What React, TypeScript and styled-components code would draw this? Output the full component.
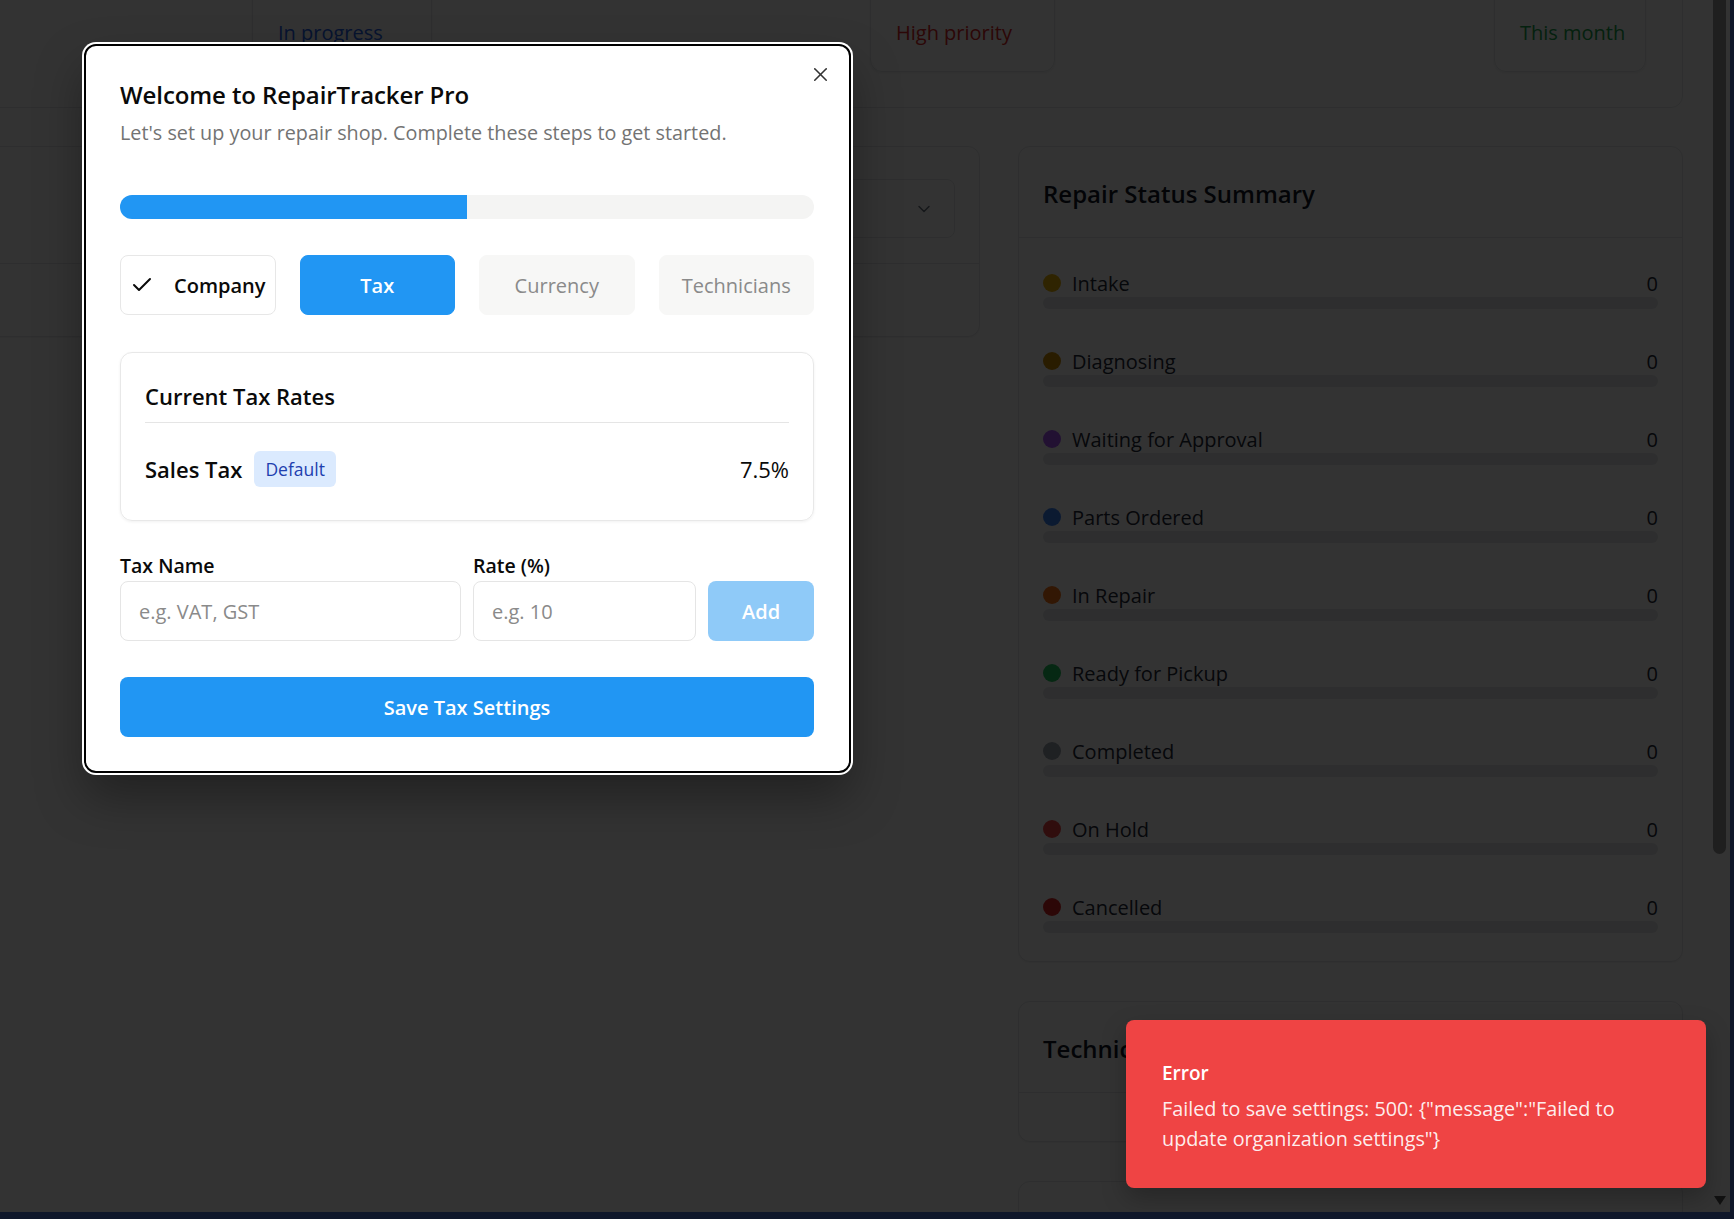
import React from "react";
import styled, { createGlobalStyle } from "styled-components";
import { X, Check, ChevronDown } from "lucide-react";

const GlobalStyle = createGlobalStyle`
  html, body { margin: 0; padding: 0; background: #0f172a; }
  body { font-family: "Open Sans", "Noto Sans", "Liberation Sans", sans-serif; }
  * { box-sizing: border-box; }
`;

const Frame = styled.div`
  position: relative;
  width: 1730px;
  height: 1212px;
  overflow: hidden;
  background: #ffffff;
  display: flex;
  color: #111827;
`;

const Main = styled.main`
  flex: 1;
  min-width: 0;
  overflow: hidden;
`;

const Content = styled.div`
  display: flex;
  flex-direction: column;
  gap: 38px;
  margin: -60px 30px 0 -16px;
`;

const StatsPanel = styled.section`
  height: 168px;
  border: 1px solid #e5e7eb;
  border-radius: 12px;
  display: flex;
  align-items: flex-end;
  padding-bottom: 35px;
`;

const StatCard = styled.div<{ $w: number; $offset: number; $color: string }>`
  width: ${(p) => p.$w}px;
  margin-left: ${(p) => p.$offset}px;
  height: 112px;
  border: 1px solid #e5e7eb;
  border-radius: 12px;
  box-shadow: 0 1px 3px rgba(0, 0, 0, 0.08);
  display: flex;
  align-items: flex-end;
  padding: 0 0 25px 25px;
  font-size: 20px;
  line-height: 26px;
  white-space: nowrap;
  color: ${(p) => p.$color};
`;

const Grid = styled.div`
  display: grid;
  grid-template-columns: 996px 665px;
  gap: 38px;
  align-items: start;
`;

const Column = styled.div`
  display: flex;
  flex-direction: column;
  gap: 39px;
`;

const Card = styled.div`
  background: #ffffff;
  border: 1px solid #e5e7eb;
  border-radius: 12px;
  box-shadow: 0 1px 2px rgba(0, 0, 0, 0.05);
  overflow: hidden;
`;

const FilterHead = styled.div`
  height: 117px;
  border-bottom: 1px solid #e5e7eb;
  display: flex;
  justify-content: flex-end;
  align-items: center;
  padding: 7px 24px 0;
`;

const Select = styled.div`
  width: 300px;
  height: 59px;
  border: 1px solid #e5e7eb;
  border-radius: 8px;
  display: flex;
  align-items: center;
  justify-content: flex-end;
  padding: 0 20px;
  color: #6b7280;
`;

const FilterBody = styled.div`
  height: 72px;
`;

const CardHead = styled.div`
  padding: 30px 24px 26px;
  border-bottom: 1px solid #e5e7eb;
  font-size: 24px;
  font-weight: 600;
  line-height: 34px;
  color: #111827;
  white-space: nowrap;
`;

const StatusList = styled.div`
  padding: 31px 24px 28px;
  display: flex;
  flex-direction: column;
  gap: 38px;
`;

const StatusRow = styled.div`
  display: flex;
  flex-direction: column;
`;

const StatusLine = styled.div`
  display: flex;
  align-items: center;
  height: 28px;
  font-size: 20px;
  color: #1f2937;
`;

const Dot = styled.span<{ $color: string }>`
  width: 18px;
  height: 18px;
  border-radius: 50%;
  background: ${(p) => p.$color};
  margin-right: 11px;
  flex: none;
`;

const StatusName = styled.span`
  flex: 1;
`;

const Track = styled.div`
  height: 12px;
  border-radius: 999px;
  background: #e5e7eb;
`;

const EmptyBody = styled.div<{ $h: number }>`
  height: ${(p) => p.$h}px;
`;

const ScrollCol = styled.div`
  width: 17px;
  flex: none;
  display: flex;
  flex-direction: column;
  align-items: flex-start;
`;

const Thumb = styled.div`
  width: 13px;
  height: 854px;
  background: #9a9a9a;
  border-radius: 0 0 7px 7px;
`;

const Spacer = styled.div`
  flex: 1;
`;

const DownArrow = styled.div`
  width: 0;
  height: 0;
  border-left: 6px solid transparent;
  border-right: 6px solid transparent;
  border-top: 9px solid #555;
  margin: 0 0 7px 1px;
`;

const Overlay = styled.div`
  position: absolute;
  inset: 0;
  background: rgba(0, 0, 0, 0.8);
`;

const Dialog = styled.div`
  position: absolute;
  left: 84px;
  top: 44px;
  width: 767px;
  background: #ffffff;
  border: 2px solid #000000;
  border-radius: 12px;
  box-shadow: 0 0 0 2px #ffffff, 0 24px 48px rgba(0, 0, 0, 0.35);
  padding: 34px 35px 34px 34px;
  color: #0a0a0a;
`;

const CloseButton = styled.button`
  position: absolute;
  top: 16px;
  right: 17px;
  width: 24px;
  height: 24px;
  padding: 0;
  border: none;
  background: transparent;
  color: #333;
  display: flex;
  align-items: center;
  justify-content: center;
`;

const Title = styled.h2`
  margin: 0;
  font-size: 24px;
  font-weight: 600;
  line-height: 30px;
  letter-spacing: -0.1px;
`;

const Subtitle = styled.p`
  margin: 10px 0 0;
  font-size: 19.8px;
  line-height: 26px;
  color: #737373;
`;

const Progress = styled.div`
  margin-top: 49px;
  height: 24px;
  border-radius: 999px;
  background: #f4f4f3;
  overflow: hidden;
`;

const ProgressFill = styled.div`
  height: 100%;
  background: #2196f3;
`;

const Steps = styled.div`
  margin-top: 36px;
  display: grid;
  grid-template-columns: repeat(4, 1fr);
  gap: 24px;
`;

type StepState = "done" | "active" | "pending";

const StepTab = styled.div<{ $state: StepState }>`
  height: 60px;
  border-radius: 8px;
  display: flex;
  align-items: center;
  justify-content: center;
  gap: 20px;
  font-size: 20px;
  font-weight: ${(p) => (p.$state === "pending" ? 500 : 600)};
  white-space: nowrap;
  border: 1px solid ${(p) => (p.$state === "done" ? "#e7e7e7" : p.$state === "active" ? "#2196f3" : "#f7f7f6")};
  background: ${(p) => (p.$state === "done" ? "#ffffff" : p.$state === "active" ? "#2196f3" : "#f7f7f6")};
  color: ${(p) => (p.$state === "done" ? "#0a0a0a" : p.$state === "active" ? "#ffffff" : "#8a8a8a")};
`;

const TaxCard = styled.div`
  margin-top: 37px;
  border: 1px solid #e8e8e8;
  border-radius: 12px;
  box-shadow: 0 1px 3px rgba(0, 0, 0, 0.06);
  padding: 0 24px 33px;
`;

const TaxCardTitle = styled.h3`
  margin: 0;
  padding: 29px 0 12px;
  font-size: 22px;
  font-weight: 600;
  line-height: 28px;
  border-bottom: 1px solid #e5e5e5;
`;

const TaxRow = styled.div`
  margin-top: 28px;
  display: flex;
  align-items: center;
`;

const TaxName = styled.span`
  font-size: 22px;
  font-weight: 600;
  margin-right: 12px;
`;

const Badge = styled.span`
  height: 36px;
  padding: 0 11px;
  display: inline-flex;
  align-items: center;
  background: #dbeafe;
  color: #1e40af;
  border-radius: 6px;
  font-size: 17.5px;
`;

const TaxRate = styled.span`
  margin-left: auto;
  font-size: 22px;
`;

const FormGrid = styled.div`
  margin-top: 33px;
  display: grid;
  grid-template-columns: repeat(12, 1fr);
  column-gap: 12px;
  align-items: end;
`;

const Field = styled.label<{ $span: number }>`
  grid-column: span ${(p) => p.$span};
  display: flex;
  flex-direction: column;
`;

const FieldLabel = styled.span`
  font-size: 19.5px;
  font-weight: 600;
  line-height: 24px;
  margin-bottom: 3px;
`;

const Input = styled.input`
  height: 60px;
  width: 100%;
  border: 1px solid #e5e5e5;
  border-radius: 8px;
  padding: 0 18px;
  font-family: inherit;
  font-size: 20px;
  color: #0a0a0a;
  outline: none;
  &::placeholder {
    color: #8a8a8a;
  }
`;

const AddButton = styled.button`
  grid-column: span 2;
  height: 60px;
  border: none;
  border-radius: 8px;
  background: #2196f3;
  opacity: 0.5;
  color: #ffffff;
  font-family: inherit;
  font-size: 20px;
  font-weight: 600;
`;

const SaveButton = styled.button`
  margin-top: 36px;
  width: 100%;
  height: 60px;
  border: none;
  border-radius: 8px;
  background: #2196f3;
  color: #ffffff;
  font-family: inherit;
  font-size: 20px;
  font-weight: 600;
`;

const Toast = styled.div`
  position: absolute;
  right: 24px;
  bottom: 24px;
  width: 580px;
  background: #ef4444;
  border-radius: 8px;
  padding: 38px 36px 34px;
  color: #ffffff;
  box-shadow: 0 10px 25px rgba(0, 0, 0, 0.25);
`;

const ToastTitle = styled.div`
  font-size: 19px;
  font-weight: 600;
  line-height: 30px;
`;

const ToastMessage = styled.div`
  margin-top: 6px;
  font-size: 19.8px;
  line-height: 30px;
  color: rgba(255, 255, 255, 0.92);
`;

const statuses = [
  { name: "Intake", color: "#eab308" },
  { name: "Diagnosing", color: "#ca8a04" },
  { name: "Waiting for Approval", color: "#a855f7" },
  { name: "Parts Ordered", color: "#3b82f6" },
  { name: "In Repair", color: "#f97316" },
  { name: "Ready for Pickup", color: "#22c55e" },
  { name: "Completed", color: "#9ca3af" },
  { name: "On Hold", color: "#ef4444" },
  { name: "Cancelled", color: "#dc2626" },
];

export default function App() {
  return (
    <>
      <GlobalStyle />
      <Frame>
        <Main>
          <Content>
            <StatsPanel>
              <StatCard $w={180} $offset={267} $color="#2563eb">In progress</StatCard>
              <StatCard $w={185} $offset={438} $color="#dc2626">High priority</StatCard>
              <StatCard $w={152} $offset={439} $color="#16a34a">This month</StatCard>
            </StatsPanel>
            <Grid>
              <Card>
                <FilterHead>
                  <Select>
                    <ChevronDown size={20} strokeWidth={1.75} />
                  </Select>
                </FilterHead>
                <FilterBody />
              </Card>
              <Column>
                <Card>
                  <CardHead>Repair Status Summary</CardHead>
                  <StatusList>
                    {statuses.map((s) => (
                      <StatusRow key={s.name}>
                        <StatusLine>
                          <Dot $color={s.color} />
                          <StatusName>{s.name}</StatusName>
                          <span>0</span>
                        </StatusLine>
                        <Track />
                      </StatusRow>
                    ))}
                  </StatusList>
                </Card>
                <Card>
                  <CardHead>Technician Workload</CardHead>
                  <EmptyBody $h={48} />
                </Card>
                <Card>
                  <CardHead>Recent Activity</CardHead>
                  <EmptyBody $h={120} />
                </Card>
              </Column>
            </Grid>
          </Content>
        </Main>
        <ScrollCol>
          <Thumb />
          <Spacer />
          <DownArrow />
        </ScrollCol>

        <Overlay />

        <Dialog role="dialog">
          <CloseButton aria-label="Close">
            <X size={23} strokeWidth={1.6} />
          </CloseButton>
          <Title>Welcome to RepairTracker Pro</Title>
          <Subtitle>Let's set up your repair shop. Complete these steps to get started.</Subtitle>
          <Progress>
            <ProgressFill style={{ width: "50%" }} />
          </Progress>
          <Steps>
            <StepTab $state="done">
              <Check size={24} strokeWidth={2} />
              Company
            </StepTab>
            <StepTab $state="active">Tax</StepTab>
            <StepTab $state="pending">Currency</StepTab>
            <StepTab $state="pending">Technicians</StepTab>
          </Steps>
          <TaxCard>
            <TaxCardTitle>Current Tax Rates</TaxCardTitle>
            <TaxRow>
              <TaxName>Sales Tax</TaxName>
              <Badge>Default</Badge>
              <TaxRate>7.5%</TaxRate>
            </TaxRow>
          </TaxCard>
          <FormGrid>
            <Field $span={6}>
              <FieldLabel>Tax Name</FieldLabel>
              <Input placeholder="e.g. VAT, GST" />
            </Field>
            <Field $span={4}>
              <FieldLabel>Rate (%)</FieldLabel>
              <Input placeholder="e.g. 10" />
            </Field>
            <AddButton disabled>Add</AddButton>
          </FormGrid>
          <SaveButton>Save Tax Settings</SaveButton>
        </Dialog>

        <Toast role="alert">
          <ToastTitle>Error</ToastTitle>
          <ToastMessage>
            Failed to save settings: 500: {'{"message":"Failed to update organization settings"}'}
          </ToastMessage>
        </Toast>
      </Frame>
    </>
  );
}
